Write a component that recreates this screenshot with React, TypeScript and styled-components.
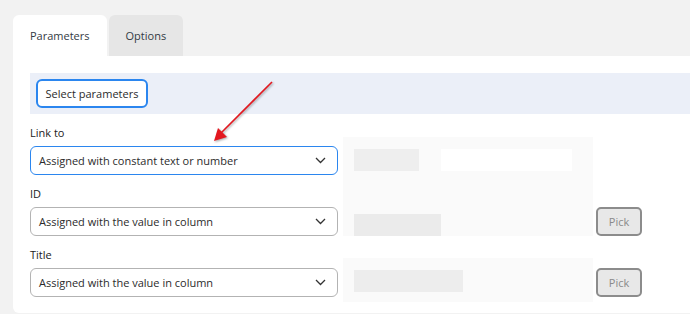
import React, { FC } from 'react'
import styled, { createGlobalStyle } from 'styled-components'

const GlobalStyle = createGlobalStyle`
  html, body {
    margin: 0;
    padding: 0;
    background: #f2f2f2;
  }
  body {
    font-family: 'Open Sans', 'Liberation Sans', sans-serif;
    font-size: 11px;
    color: #2b2b2b;
  }
`

const Page = styled.div`
  position: relative;
  width: 690px;
  height: 314px;
  overflow: hidden;
  padding: 15px 0 0 13px;
  box-sizing: border-box;
`

const Tabs = styled.div`
  display: flex;
  gap: 2px;
`

const Tab = styled.div<{ active?: boolean }>`
  height: 41px;
  padding: 0 17px;
  display: flex;
  align-items: center;
  border-radius: 6px 6px 0 0;
  background: ${({ active }) => (active ? '#ffffff' : '#e6e6e6')};
  color: #333a44;
  font-size: 11px;
`

const Panel = styled.div`
  width: 700px;
  height: 257px;
  background: #ffffff;
  border-radius: 0 0 0 6px;
  padding: 17px 0 0 17px;
  box-sizing: border-box;
`

const Toolbar = styled.div`
  height: 41px;
  background: #ebeff8;
  display: flex;
  align-items: center;
  padding-left: 6px;
`

const ToolButton = styled.button`
  height: 29px;
  width: 112px;
  padding: 0;
  border: 2px solid #2b86ef;
  border-radius: 6px;
  background: #ffffff;
  font-family: inherit;
  font-size: 11px;
  color: #2b2b2b;
`

const Form = styled.div`
  display: flex;
  align-items: flex-start;
`

const Fields = styled.div`
  width: 308px;
  display: flex;
  flex-direction: column;
  padding-top: 11px;
`

const Label = styled.div`
  line-height: 16px;
  height: 16px;
  margin-bottom: 5px;
  color: #222;
`

const Select = styled.div<{ focused?: boolean }>`
  height: 29px;
  box-sizing: border-box;
  border: 1.5px solid ${({ focused }) => (focused ? '#2b86ef' : '#b3b3b3')};
  border-radius: 6px;
  display: flex;
  align-items: center;
  justify-content: space-between;
  padding: 0 11px 0 8px;
  margin-bottom: 11px;
  color: #2b2b2b;
`

const Chevron = () => (
  <svg width="11" height="7" viewBox="0 0 11 7">
    <path d="M1 1 L5.5 5.5 L10 1" fill="none" stroke="#333" strokeWidth="1.3" />
  </svg>
)

const Redacted = styled.div`
  width: 250px;
  margin: 23px 0 0 5px;
  display: flex;
  flex-direction: column;
  gap: 22px;
`

const Smudge = styled.div<{ h: number }>`
  height: ${({ h }) => h}px;
  background: #fafafa;
  display: flex;
  flex-direction: column;
  justify-content: space-between;
  padding-top: 12px;
  box-sizing: border-box;
`

const SmudgeRow = styled.div`
  height: 22px;
  display: flex;
  padding-left: 11px;
`

const Blot = styled.div<{ w: number; tone: string }>`
  width: ${({ w }) => w}px;
  height: 22px;
  background: ${({ tone }) => tone};
`

const Picks = styled.div`
  margin: 93px 0 0 3px;
  display: flex;
  flex-direction: column;
  gap: 32px;
`

const PickButton = styled.button`
  width: 46px;
  height: 29px;
  border: 2px solid #8c8c8c;
  border-radius: 5px;
  background: #e8e8e8;
  color: #8a8a8a;
  font-family: inherit;
  font-size: 11px;
  padding: 0;
`

const Arrow = styled.svg`
  position: absolute;
  left: 205px;
  top: 75px;
  filter: drop-shadow(1px 1px 1px rgba(0, 0, 0, 0.35));
`

const FieldSelect: FC<{ label: string; value: string; focused?: boolean }> = ({ label, value, focused }) => (
  <>
    <Label>{label}</Label>
    <Select focused={focused}>
      <span>{value}</span>
      <Chevron />
    </Select>
  </>
)

const App: FC = () => (
  <Page>
    <GlobalStyle />
    <Tabs>
      <Tab active>Parameters</Tab>
      <Tab>Options</Tab>
    </Tabs>
    <Panel>
      <Toolbar>
        <ToolButton>Select parameters</ToolButton>
      </Toolbar>
      <Form>
        <Fields>
          <FieldSelect label="Link to" value="Assigned with constant text or number" focused />
          <FieldSelect label="ID" value="Assigned with the value in column" />
          <FieldSelect label="Title" value="Assigned with the value in column" />
        </Fields>
        <Redacted>
          <Smudge h={99}>
            <SmudgeRow>
              <Blot w={65} tone="#eeeeee" />
              <Blot w={22} tone="#fafafa" />
              <Blot w={131} tone="#ffffff" />
            </SmudgeRow>
            <SmudgeRow>
              <Blot w={87} tone="#ebebeb" />
            </SmudgeRow>
          </Smudge>
          <Smudge h={44}>
            <SmudgeRow>
              <Blot w={109} tone="#ededed" />
            </SmudgeRow>
          </Smudge>
        </Redacted>
        <Picks>
          <PickButton>Pick</PickButton>
          <PickButton>Pick</PickButton>
        </Picks>
      </Form>
    </Panel>
    <Arrow width="75" height="72" viewBox="0 0 75 72">
      <line x1="67" y1="7" x2="16" y2="58" stroke="#e3171f" strokeWidth="1.6" />
      <polygon points="9,66 13,53 22,62" fill="#e3171f" />
    </Arrow>
  </Page>
)

export default App
